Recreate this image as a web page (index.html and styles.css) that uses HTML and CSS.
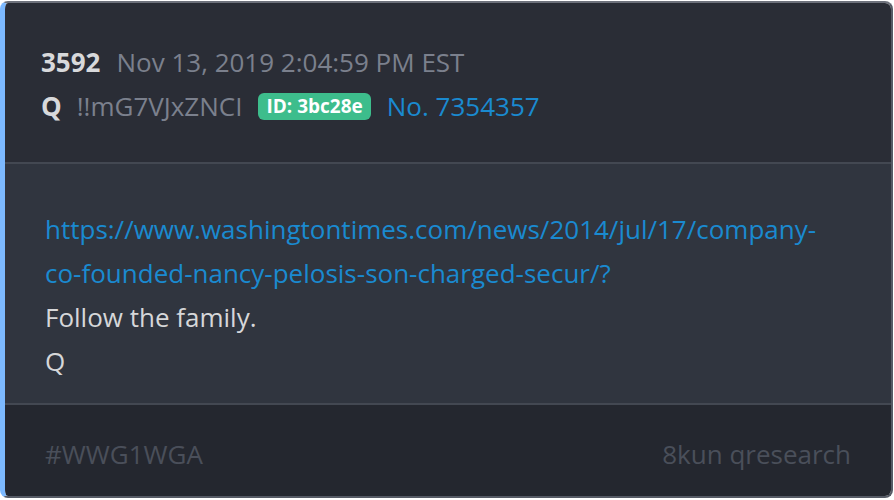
FILE: index.html
```html
<!DOCTYPE html>
<html>
<head>
<meta charset="utf-8">
<link rel="stylesheet" href="styles.css">
</head>
<body>
<div class="card">
  <div class="head">
    <div class="row">
      <span class="num">3592</span>
      <span class="date">Nov 13, 2019 2:04:59 PM EST</span>
    </div>
    <div class="row">
      <span class="author">Q</span>
      <span class="trip">!!mG7VJxZNCI</span>
      <span class="badge">ID: 3bc28e</span>
      <span class="postno">No. 7354357</span>
    </div>
  </div>
  <div class="body">
    <a class="link">https://www.washingtontimes.com/news/2014/jul/17/company-<br>co-founded-nancy-pelosis-son-charged-secur/?</a>
    <p class="line">Follow the family.</p>
    <p class="line">Q</p>
  </div>
  <div class="foot">
    <span class="tag">#WWG1WGA</span>
    <span class="src">8kun qresearch</span>
  </div>
</div>
</body>
</html>
```
FILE: styles.css
```css
html, body { margin: 0; padding: 0; background: #ffffff; }
body { font-family: "Open Sans", "Noto Sans", sans-serif; }
.card {
  box-sizing: border-box;
  width: 893px;
  height: 497px;
  margin-top: 1px;
  border: 2px solid #565b66;
  border-top-color: #6e727c;
  border-left: 5px solid #7cb9ff;
  border-radius: 8px;
  overflow: hidden;
  display: flex;
  flex-direction: column;
}
.head {
  background: #2a2d36;
  height: 161px;
  box-sizing: border-box;
  padding: 41px 0 0 36px;
  border-bottom: 2px solid #434852;
  display: flex;
  flex-direction: column;
  gap: 8px;
}
.row { display: flex; align-items: center; height: 36px; font-size: 26px; }
.num { font-weight: 700; color: #d8d9db; margin-right: 16px; }
.date { color: #7b808d; }
.author { font-weight: 700; color: #d8d9db; margin-right: 15px; }
.trip { color: #7b808d; margin-right: 16px; }
.badge {
  background: #3dbd8c;
  color: #ffffff;
  font-weight: 700;
  font-size: 19px;
  padding: 0 8px;
  height: 27px;
  line-height: 27px;
  border-radius: 6px;
  margin-right: 16px;
}
.postno { color: #1a8ad0; }
.body {
  background: #30353f;
  height: 241px;
  box-sizing: border-box;
  padding: 43px 0 0 40px;
  border-bottom: 2px solid #434852;
  font-size: 26px;
  line-height: 44px;
}
.link { color: #1a8ad0; text-decoration: none; display: block; }
.line { margin: 0; color: #d6d7d9; }
.foot {
  flex: 1;
  background: #24272f;
  display: flex;
  justify-content: space-between;
  align-items: center;
  padding: 6px 40px 0 40px;
  font-size: 26px;
  color: #4a4f5a;
}
```
